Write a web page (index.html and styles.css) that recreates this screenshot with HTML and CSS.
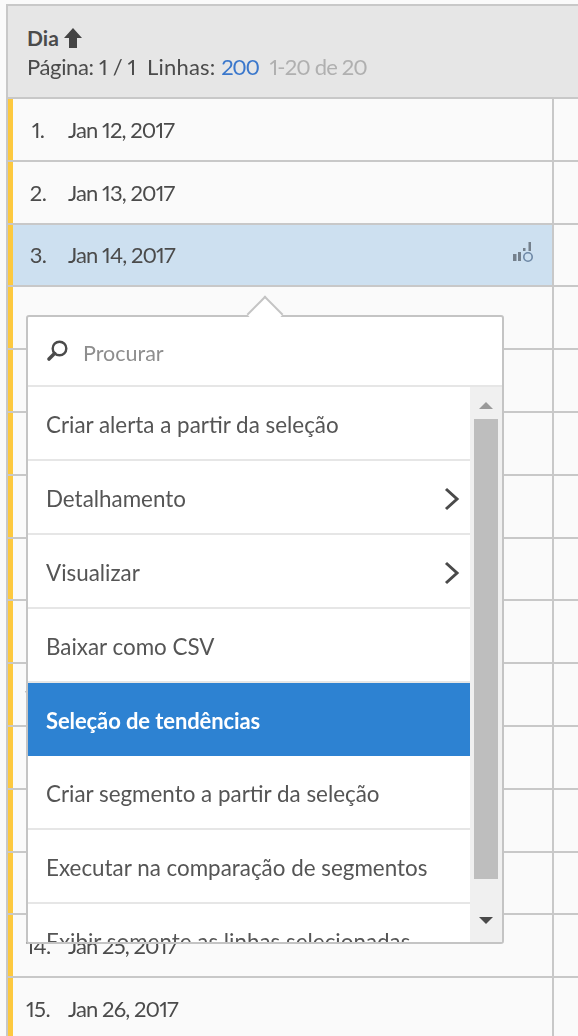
FILE: index.html
```html
<!DOCTYPE html>
<html lang="pt">
<head>
<meta charset="utf-8">
<title>Dia</title>
<link rel="stylesheet" href="styles.css">
</head>
<body>
<main class="table">
  <header class="head">
    <div class="head-title">Dia
      <svg class="sort-icon" viewBox="0 0 18 20" width="18" height="20"><path d="M9 0 18 10H13V20H5V10H0Z"/></svg>
    </div>
    <div class="head-meta"><span class="pages">Página: <span class="digits">1 / 1</span></span><span class="lines">Linhas: <span class="link">200</span></span><span class="muted">1-20 de 20</span></div>
  </header>
  <div class="row"><i class="mark"></i><div class="cell"><span class="num">1.</span><span class="date">Jan 12, 2017</span></div><div class="rest"></div></div>
  <div class="row"><i class="mark"></i><div class="cell"><span class="num">2.</span><span class="date">Jan 13, 2017</span></div><div class="rest"></div></div>
  <div class="row selected"><i class="mark"></i><div class="cell"><span class="num">3.</span><span class="date">Jan 14, 2017</span>
    <svg class="row-icon" viewBox="0 0 22 22" width="22" height="22"><g fill="#74808c"><rect x="1" y="12" width="3.5" height="7"/><rect x="6" y="10" width="3" height="9"/><rect x="11" y="6" width="2.5" height="3"/><rect x="16.5" y="0" width="2.5" height="9"/></g><circle cx="16" cy="15" r="4.2" fill="none" stroke="#6d87a5" stroke-width="1.6"/></svg>
  </div><div class="rest"></div></div>
  <div class="row"><i class="mark"></i><div class="cell"></div><div class="rest"></div></div>
  <div class="row"><i class="mark"></i><div class="cell"><span class="num">5.</span><span class="date">Jan 16, 2017</span></div><div class="rest"></div></div>
  <div class="row"><i class="mark"></i><div class="cell"><span class="num">6.</span><span class="date">Jan 17, 2017</span></div><div class="rest"></div></div>
  <div class="row"><i class="mark"></i><div class="cell"><span class="num">7.</span><span class="date">Jan 18, 2017</span></div><div class="rest"></div></div>
  <div class="row"><i class="mark"></i><div class="cell"><span class="num">8.</span><span class="date">Jan 19, 2017</span></div><div class="rest"></div></div>
  <div class="row"><i class="mark"></i><div class="cell"><span class="num">9.</span><span class="date">Jan 20, 2017</span></div><div class="rest"></div></div>
  <div class="row"><i class="mark"></i><div class="cell"><span class="num">10.</span><span class="date">Jan 21, 2017</span></div><div class="rest"></div></div>
  <div class="row"><i class="mark"></i><div class="cell"><span class="num">11.</span><span class="date">Jan 22, 2017</span></div><div class="rest"></div></div>
  <div class="row"><i class="mark"></i><div class="cell"><span class="num">12.</span><span class="date">Jan 23, 2017</span></div><div class="rest"></div></div>
  <div class="row"><i class="mark"></i><div class="cell"><span class="num">13.</span><span class="date">Jan 24, 2017</span></div><div class="rest"></div></div>
  <div class="row"><i class="mark"></i><div class="cell"><span class="num">14.</span><span class="date">Jan 25, 2017</span></div><div class="rest"></div></div>
  <div class="row"><i class="mark"></i><div class="cell"><span class="num">15.</span><span class="date">Jan 26, 2017</span></div><div class="rest"></div></div>
</main>
<aside class="popover">
  <div class="popover-arrow"></div>
  <div class="search">
    <svg class="search-icon" viewBox="0 0 24 24" width="24" height="24"><circle cx="13.5" cy="9.5" r="6.8" fill="none" stroke="#4a4a4a" stroke-width="2.4"/><path d="M8.5 14.5 3 20" stroke="#4a4a4a" stroke-width="3.6" stroke-linecap="round"/></svg>
    <span class="search-text">Procurar</span>
  </div>
  <div class="menu-body">
    <ul class="menu">
      <li class="item">Criar alerta a partir da seleção</li>
      <li class="item">Detalhamento<svg class="chev" viewBox="0 0 16 24" width="16" height="24"><path d="M2 2 13 12 2 22" fill="none" stroke="#4a4a4a" stroke-width="3"/></svg></li>
      <li class="item">Visualizar<svg class="chev" viewBox="0 0 16 24" width="16" height="24"><path d="M2 2 13 12 2 22" fill="none" stroke="#4a4a4a" stroke-width="3"/></svg></li>
      <li class="item">Baixar como CSV</li>
      <li class="item active">Seleção de tendências</li>
      <li class="item">Criar segmento a partir da seleção</li>
      <li class="item">Executar na comparação de segmentos</li>
      <li class="item">Exibir somente as linhas selecionadas</li>
    </ul>
    <div class="scrollbar">
      <span class="arrow-up"></span>
      <span class="thumb"></span>
      <span class="arrow-down"></span>
    </div>
  </div>
</aside>
</body>
</html>
```

FILE: styles.css
```css
* { box-sizing: border-box; }
html, body { margin: 0; height: 100%; overflow: hidden; }
body {
  background: #fafafa;
  font-family: "Lato", "Liberation Sans", sans-serif;
  font-variant-numeric: proportional-nums;
  color: #4b4b4b;
  position: relative;
  filter: blur(0.4px);
}
.table {
  margin: 4px 0 0 6px;
  border-left: 2px solid #c8c8c8;
  border-top: 2px solid #c8c8c8;
}
.head {
  height: 93px;
  background: #e6e6e6;
  border-bottom: 2px solid #c8c8c8;
  padding: 18px 0 0 19px;
}
.head-title {
  display: flex;
  align-items: center;
  gap: 5px;
  font-size: 21px;
  font-weight: 700;
  line-height: 28px;
}
.sort-icon { fill: #444; }
.head-meta {
  display: flex;
  gap: 11px;
  font-size: 22px;
  line-height: 30px;
}
.pages { letter-spacing: -0.35px; }
.lines { letter-spacing: 0.2px; }
.link { color: #3b78cc; letter-spacing: -1.4px; }
.muted { color: #b0b0b0; letter-spacing: -0.85px; }
.row {
  display: flex;
  height: 62.8px;
  border-bottom: 2px solid #c8c8c8;
}
.mark { width: 5px; background: #fdc93f; }
.cell {
  width: 541px;
  display: flex;
  align-items: center;
  padding-left: 12px;
  font-size: 22px;
  border-right: 2px solid #c8c8c8;
  position: relative;
}
.num { width: 26px; margin-right: 17px; text-align: center; letter-spacing: -0.6px; }
.date { letter-spacing: -0.9px; }
.rest { flex: 1; }
.selected .cell { background: #cde0f0; }
.row-icon { margin-left: auto; margin-right: 18px; margin-top: -3px; }
.popover {
  position: absolute;
  left: 26px;
  top: 315px;
  width: 478px;
  height: 629px;
  background: #fff;
  border: 2px solid #c4c4c4;
  border-radius: 3px;
}
.popover-arrow {
  position: absolute;
  left: 224px;
  top: -16px;
  width: 26px;
  height: 26px;
  background: #fff;
  border-top: 2px solid #c4c4c4;
  border-left: 2px solid #c4c4c4;
  transform: rotate(45deg);
}
.search {
  position: relative;
  height: 70px;
  display: flex;
  align-items: center;
  gap: 13px;
  padding-left: 18px;
  border-bottom: 2px solid #e6e6e6;
}
.search-text { font-size: 21.5px; color: #8e8e8e; padding-top: 4px; }
.menu-body {
  display: flex;
  height: 555px;
  overflow: hidden;
}
.menu {
  list-style: none;
  margin: 0;
  padding: 0;
  width: 442px;
}
.item {
  height: 74px;
  display: flex;
  align-items: center;
  justify-content: space-between;
  padding: 3px 10px 0 18px;
  font-size: 22.4px;
  color: #555;
  border-bottom: 2px solid #e6e6e6;
}
.active {
  height: 73px;
  background: #2d82d2;
  color: #fff;
  font-size: 22px;
  font-weight: 700;
  letter-spacing: -0.1px;
  border-bottom-color: #2d82d2;
}
.scrollbar {
  flex: 1;
  background: #f0f0f0;
  display: flex;
  flex-direction: column;
  align-items: center;
  padding: 15px 0 13px;
}
.thumb {
  width: 24px;
  height: 460px;
  background: #bebebe;
  margin: 10px 0 38px;
}
.arrow-up, .arrow-down {
  width: 0;
  height: 0;
  border-left: 7px solid transparent;
  border-right: 7px solid transparent;
}
.arrow-up { border-bottom: 7px solid #9a9a9a; }
.arrow-down { border-top: 7px solid #4a4a4a; }
```
